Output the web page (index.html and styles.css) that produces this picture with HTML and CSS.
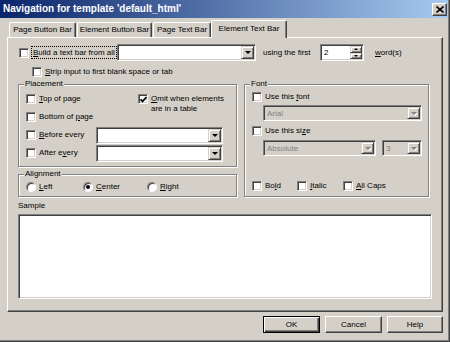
FILE: index.html
```html
<!DOCTYPE html>
<html lang="en">
  <head>
    <meta charset="UTF-8" />
    <title>Navigation for template 'default_html'</title>
    <link rel="stylesheet" href="styles.css">
  </head>
  <body>
    <div class="window">
      <div class="titlebar">
        <span class="title">Navigation for template 'default_html'</span>
        <span class="close-btn">
          <svg width="8" height="7" viewBox="0 0 8 7"><path d="M0.5 0.5l7 6M7.5 0.5l-7 6" stroke="#000" stroke-width="1.6" fill="none"/></svg>
        </span>
      </div>

      <div class="client">
        <div class="tabs">
          <div class="tab tab-page-btn">Page Button Bar</div>
          <div class="tab tab-elem-btn">Element Button Bar</div>
          <div class="tab tab-page-text">Page Text Bar</div>
          <div class="tab tab-elem-text active">Element Text Bar</div>
        </div>

        <div class="panel">
          <div class="row-build">
            <div class="opt opt-build">
              <span class="check"></span>
              <span class="focus-text"><u>B</u>uild a text bar from all</span>
            </div>
            <div class="combo combo-build">
              <span class="combo-text"></span>
              <span class="drop-btn"><i class="arrow"></i></span>
            </div>
            <span class="using">using the first</span>
            <div class="spin">
              <span class="combo-text">2</span>
              <span class="spin-btns">
                <span class="spin-btn"><i class="arrow small up"></i></span>
                <span class="spin-btn"><i class="arrow small"></i></span>
              </span>
            </div>
            <span class="words"><u>w</u>ord(s)</span>
          </div>

          <div class="opt row-strip">
            <span class="check"></span>
            <span><u>S</u>trip input to first blank space or tab</span>
          </div>

          <div class="columns">
            <div class="col-left">
              <div class="group placement">
                <div class="group-title">Placement</div>
                <div class="rows">
                  <div class="prow">
                    <div class="opt cell-top"><span class="check"></span><span><u>T</u>op of page</span></div>
                    <div class="opt omit">
                      <span class="check">
                        <svg width="7" height="7" viewBox="0 0 7 7"><path d="M0.5 3.2l2 2.2 4-4.4" stroke="#000" stroke-width="1.7" fill="none"/></svg>
                      </span>
                      <span><u>O</u>mit when elements<br>are in a table</span>
                    </div>
                  </div>
                  <div class="prow">
                    <div class="opt"><span class="check"></span><span>Bottom of <u>p</u>age</span></div>
                  </div>
                  <div class="prow">
                    <div class="opt cell-every"><span class="check"></span><span><u>B</u>efore every</span></div>
                    <div class="combo combo-every">
                      <span class="combo-text"></span>
                      <span class="drop-btn"><i class="arrow"></i></span>
                    </div>
                  </div>
                  <div class="prow">
                    <div class="opt cell-every"><span class="check"></span><span>After e<u>v</u>ery</span></div>
                    <div class="combo combo-every">
                      <span class="combo-text"></span>
                      <span class="drop-btn"><i class="arrow"></i></span>
                    </div>
                  </div>
                </div>
              </div>

              <div class="group alignment">
                <div class="group-title">Alignment</div>
                <div class="radios">
                  <div class="opt cell-left"><span class="radio"></span><span><u>L</u>eft</span></div>
                  <div class="opt cell-center"><span class="radio on"></span><span><u>C</u>enter</span></div>
                  <div class="opt"><span class="radio"></span><span><u>R</u>ight</span></div>
                </div>
              </div>
            </div>

            <div class="group font">
              <div class="group-title">Font</div>
              <div class="opt frow"><span class="check"></span><span>Use this <u>f</u>ont</span></div>
              <div class="combo disabled combo-font">
                <span class="combo-text">Arial</span>
                <span class="drop-btn"><i class="arrow"></i></span>
              </div>
              <div class="opt frow frow-size"><span class="check"></span><span>Use this si<u>z</u>e</span></div>
              <div class="size-combos">
                <div class="combo disabled combo-abs">
                  <span class="combo-text">Absolute</span>
                  <span class="drop-btn"><i class="arrow"></i></span>
                </div>
                <div class="combo disabled combo-num">
                  <span class="combo-text">3</span>
                  <span class="drop-btn"><i class="arrow"></i></span>
                </div>
              </div>
              <div class="styles">
                <div class="opt cell-bold"><span class="check"></span><span>Bo<u>l</u>d</span></div>
                <div class="opt cell-italic"><span class="check"></span><span><u>I</u>talic</span></div>
                <div class="opt"><span class="check"></span><span><u>A</u>ll Caps</span></div>
              </div>
            </div>
          </div>

          <div class="sample-label">Sample</div>
          <div class="sample-box"></div>
        </div>

        <div class="buttons">
          <button class="btn default">OK</button>
          <button class="btn">Cancel</button>
          <button class="btn btn-help">Help</button>
        </div>
      </div>
    </div>
  </body>
</html>
```

FILE: styles.css
```css
/* Win2000 system colours */
:root {
  --face: #d4d0c8;
  --shadow: #808080;
  --dark: #404040;
  --light: #ffffff;
}

* {
  margin: 0;
  padding: 0;
  box-sizing: border-box;
}

body {
  font-family: "Liberation Sans", Arial, sans-serif;
  font-size: 8px;
  line-height: 10px;
  color: #000;
  background-color: var(--face);
  white-space: nowrap;
  overflow: hidden;
}

u {
  text-decoration: underline;
}

.window {
  width: 450px;
  height: 342px;
  background-color: var(--face);
  border-right: 1px solid var(--dark);
  border-bottom: 1px solid var(--dark);
  box-shadow: inset -1px -1px 0 var(--shadow);
}

.titlebar {
  height: 18px;
  margin-right: 1px;
  padding: 0 1px 0 3px;
  display: flex;
  align-items: center;
  justify-content: space-between;
  background: linear-gradient(to right, #0a246a, #a6caf0);
}

.title {
  color: #fff;
  font-weight: bold;
  font-size: 10px;
}

.close-btn {
  width: 15px;
  height: 13px;
  display: flex;
  align-items: center;
  justify-content: center;
  background-color: var(--face);
  border: 1px solid;
  border-color: var(--light) var(--dark) var(--dark) var(--light);
  box-shadow: inset -1px -1px 0 var(--shadow);
}

.client {
  padding: 2px 0 0 7px;
}

/* tabs */
.tabs {
  display: flex;
  align-items: flex-end;
  height: 17px;
  padding-left: 2px;
}

.tab {
  height: 15px;
  margin-right: 1px;
  text-align: center;
  line-height: 14px;
  border-top: 1px solid var(--light);
  border-left: 1px solid var(--light);
  border-right: 1px solid var(--dark);
  border-radius: 2px 2px 0 0;
  box-shadow: inset -1px 0 0 var(--shadow);
}

.tab.active {
  height: 18px;
  margin-right: 0;
  margin-bottom: -1px;
  line-height: 15px;
  position: relative;
  z-index: 1;
  background-color: var(--face);
}

.tab-page-btn { width: 67px; }
.tab-elem-btn { width: 75px; }
.tab-page-text { width: 58px; margin-right: 0; }
.tab-elem-text { width: 76px; }

.panel {
  width: 436px;
  height: 275px;
  padding: 6px 10px 0 10px;
  border-top: 1px solid var(--light);
  border-left: 1px solid var(--light);
  border-right: 1px solid var(--dark);
  border-bottom: 1px solid var(--dark);
  box-shadow: inset -1px -1px 0 var(--shadow);
}

/* common controls */
.opt {
  display: flex;
  align-items: center;
  gap: 3px;
}

.check {
  width: 10px;
  height: 10px;
  flex: none;
  display: flex;
  align-items: center;
  justify-content: center;
  background-color: #fff;
  border: 1px solid;
  border-color: var(--shadow) var(--light) var(--light) var(--shadow);
  box-shadow: inset 1px 1px 0 var(--dark), inset -1px -1px 0 var(--face);
}

.radio {
  width: 10px;
  height: 10px;
  flex: none;
  display: flex;
  align-items: center;
  justify-content: center;
  border-radius: 50%;
  background-color: #fff;
  border: 1px solid;
  border-color: var(--shadow) var(--light) var(--light) var(--shadow);
  box-shadow: inset 1px 1px 0 var(--dark);
}

.radio.on::after {
  content: "";
  width: 4px;
  height: 4px;
  border-radius: 50%;
  background-color: #000;
}

.combo,
.spin {
  display: flex;
  height: 17px;
  padding: 1px;
  background-color: #fff;
  border: 1px solid;
  border-color: var(--shadow) var(--light) var(--light) var(--shadow);
  box-shadow: inset 1px 1px 0 var(--dark), inset -1px -1px 0 var(--face);
}

.combo-text {
  flex: 1;
  padding-left: 2px;
  line-height: 13px;
}

.drop-btn,
.spin-btn {
  width: 13px;
  display: flex;
  align-items: center;
  justify-content: center;
  background-color: var(--face);
  border: 1px solid;
  border-color: var(--face) var(--dark) var(--dark) var(--face);
  box-shadow: inset 1px 1px 0 var(--light), inset -1px -1px 0 var(--shadow);
}

.arrow {
  width: 0;
  height: 0;
  border-top: 3px solid #000;
  border-left: 3px solid transparent;
  border-right: 3px solid transparent;
}

.arrow.small {
  border-top-width: 2px;
  border-left-width: 2px;
  border-right-width: 2px;
}

.arrow.up {
  border-top: 0;
  border-bottom: 2px solid #000;
}

.combo.disabled {
  background-color: var(--face);
  color: var(--shadow);
}

.combo.disabled .arrow {
  border-top-color: var(--shadow);
  filter: drop-shadow(1px 1px 0 #fff);
}

/* first rows */
.row-build {
  display: flex;
  align-items: center;
  height: 17px;
}

.opt-build {
  width: 98px;
  margin-left: 1px;
}

.focus-text {
  padding: 0 1px;
  line-height: 11px;
  outline: 1px dotted #000;
}

.combo-build {
  width: 139px;
}

.using {
  width: 57px;
  margin-left: 7px;
}

.spin {
  width: 44px;
}

.spin-btns {
  display: flex;
  flex-direction: column;
  width: 12px;
}

.spin-btn {
  flex: 1;
  width: 12px;
}

.words {
  margin-left: 11px;
}

.row-strip {
  height: 12px;
  margin: 5px 0 0 14px;
}

/* group boxes */
.columns {
  display: flex;
  margin-top: 6px;
}

.col-left {
  width: 219px;
}

.group {
  border: 1px solid var(--shadow);
  box-shadow: inset 1px 1px 0 var(--light), 1px 1px 0 var(--light);
  padding: 0 6px 3px 7px;
}

.group-title {
  width: fit-content;
  align-self: flex-start;
  margin: -6px 0 0 -2px;
  padding: 0 1px;
  background-color: var(--face);
}

.placement {
  padding-bottom: 4px;
}

.placement .rows {
  margin-top: 1px;
}

.prow {
  display: flex;
  align-items: center;
  height: 18px;
}

.cell-top { width: 112px; }
.cell-every { width: 70px; }

.omit {
  align-self: flex-start;
  align-items: flex-start;
  margin-top: 4px;
}

.combo-every {
  width: 127px;
}

.alignment {
  margin-top: 7px;
}

.radios {
  display: flex;
  align-items: center;
  height: 12px;
  margin-top: 2px;
}

.cell-left { width: 57px; }
.cell-center { width: 64px; }

.font {
  width: 185px;
  margin-left: 7px;
  display: flex;
  flex-direction: column;
}

.frow {
  height: 14px;
  margin-top: 1px;
}

.frow-size {
  margin-top: 3px;
}

.combo-font {
  width: 159px;
  height: 16px;
  margin: 1px 0 0 11px;
}

.size-combos {
  display: flex;
  gap: 6px;
  margin: 2px 0 0 11px;
}

.combo-abs { width: 113px; height: 16px; }
.combo-num { width: 40px; height: 16px; }

.styles {
  display: flex;
  align-items: center;
  height: 14px;
  margin-top: auto;
}

.cell-bold { width: 45px; }
.cell-italic { width: 46px; }

/* sample */
.sample-label {
  margin-top: 4px;
}

.sample-box {
  height: 85px;
  margin-top: 3px;
  background-color: #fff;
  border: 1px solid;
  border-color: var(--shadow) var(--light) var(--light) var(--shadow);
  box-shadow: inset 1px 1px 0 var(--dark), inset -1px -1px 0 var(--face);
}

/* dialog buttons */
.buttons {
  width: 436px;
  display: flex;
  justify-content: flex-end;
  gap: 5px;
  margin-top: 4px;
}

.btn {
  width: 57px;
  height: 17px;
  font: inherit;
  color: #000;
  background-color: var(--face);
  border: 1px solid;
  border-color: var(--light) var(--dark) var(--dark) var(--light);
  box-shadow: inset -1px -1px 0 var(--shadow);
}

.btn.default {
  border-color: #000;
  box-shadow: inset 1px 1px 0 var(--light), inset -1px -1px 0 var(--dark), inset -2px -2px 0 var(--shadow);
}

.btn-help {
  width: 56px;
}
```
